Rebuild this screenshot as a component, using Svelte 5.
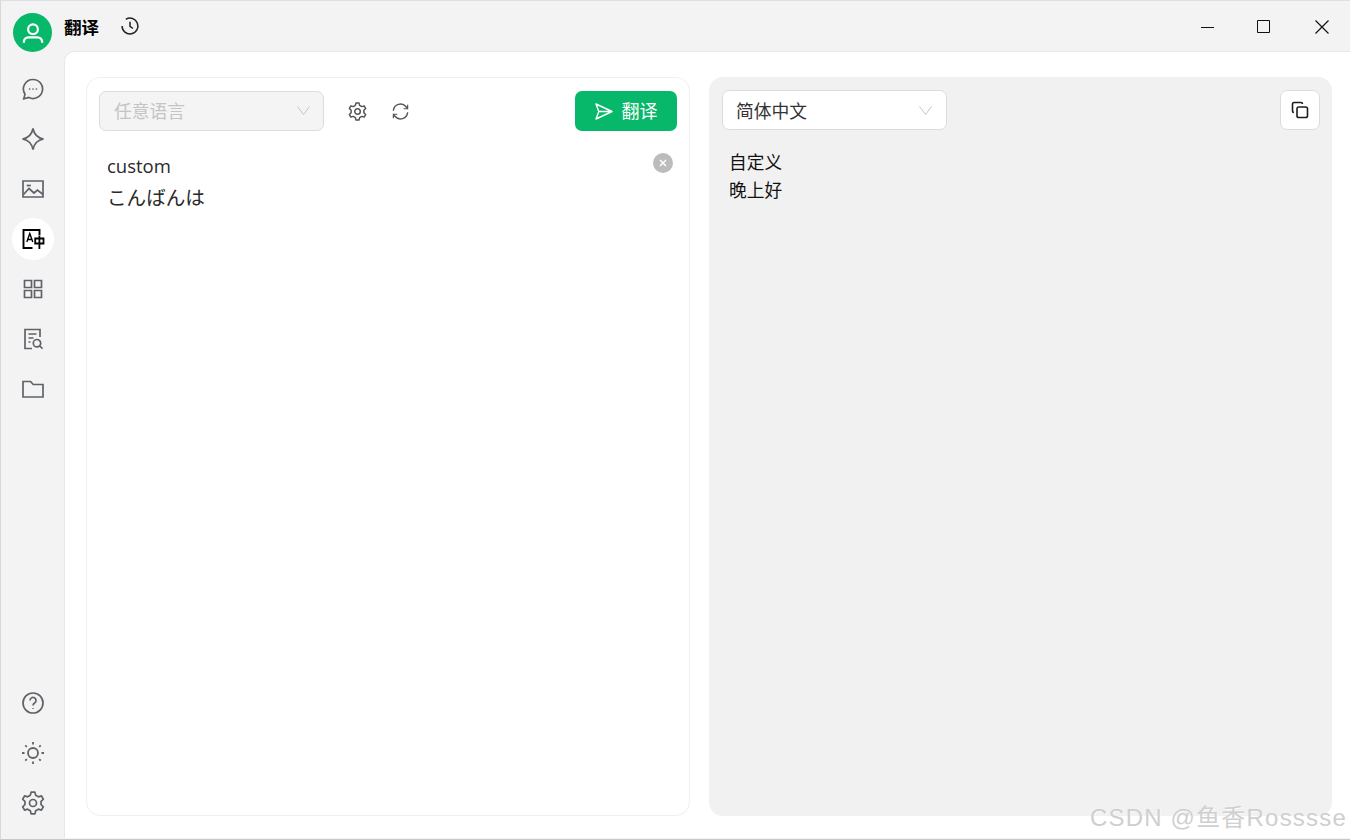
<script>
  // six lobed gear outline, same shape in the sidebar and in the toolbar
  function gearPath(outer, inner) {
    const pts = [];
    for (let k = 0; k < 6; k++) {
      const a = -90 + k * 60;
      for (const [off, r] of [[-19, inner], [-10, outer], [10, outer], [19, inner]]) {
        const t = ((a + off) * Math.PI) / 180;
        pts.push(`${(12 + r * Math.cos(t)).toFixed(2)} ${(12 + r * Math.sin(t)).toFixed(2)}`);
      }
    }
    return 'M' + pts.join('L') + 'Z';
  }

  const gear = gearPath(11, 8.2);

  const topNav = [
    { id: 'chat', paths: ['M12 2.5a9.5 9.5 0 1 1-4.2 18L2.8 21.8l1.2-4.6A9.5 9.5 0 0 1 12 2.5Z', 'M8.6 12h.01M12 12h.01M15.4 12h.01'] },
    { id: 'spark', paths: ['M12 1.5c1.1 6 4.5 9.4 10.5 10.5-6 1.1-9.4 4.5-10.5 10.5-1.1-6-4.5-9.4-10.5-10.500 6-1.100 9.400-4.500 10.500-10.500Z'] },
    { id: 'image', paths: ['M2 4h20v16H2Z', 'M2.5 17.5l5.5-6 5 4.500 3.500-3 5.500 4.500', 'M6.5 8.500h2.500v.01h-2.500Z'] },
    { id: 'translate', active: true },
    { id: 'apps', paths: ['M3.5 3.5h7v7h-7ZM13.5 3.5h7v7h-7ZM3.5 13.5h7v7h-7ZM13.5 13.5h7v7h-7Z'] },
    { id: 'report', paths: ['M19 10V2.5H4v19h7', 'M7.5 7h8M7.5 11h5M7.5 15h2', 'M16 12.5a3.7 3.7 0 1 1 0 7.4 3.7 3.7 0 0 1 0-7.4ZM18.8 19l2.7 2.7'] },
    { id: 'folder', paths: ['M2 4.5h7.5l2.8 3H22v12.500H2Z'] }
  ];
</script>

<div class="app">
  <header class="titlebar">
    <div class="avatar">
      <svg viewBox="0 0 24 24" width="26" height="26" fill="none" stroke="#fff" stroke-width="2">
        <circle cx="12" cy="8.5" r="4.5" />
        <path d="M3.5 21c0-3.500 2-5 4.500-5h8c2.500 0 4.500 1.500 4.500 5" />
      </svg>
    </div>
    <span class="title">翻译</span>
    <svg class="history" viewBox="0 0 24 24" width="20" height="20" fill="none" stroke="#222" stroke-width="1.8">
      <path d="M7 4A9.500 9.500 0 1 1 2.500 12" />
      <path d="M12 7v5.500l3.500 2.500" />
    </svg>
    <div class="window-btns">
      <svg viewBox="0 0 14 14" width="14" height="14" stroke="#111" fill="none"><path d="M0 7.5h13" /></svg>
      <svg viewBox="0 0 14 14" width="14" height="14" stroke="#111" fill="none"><path d="M.5.5h12v12H.5Z" /></svg>
      <svg class="close" viewBox="0 0 14 14" width="14" height="14" stroke="#111" stroke-width="1.2" fill="none"><path d="M.5.5l13 13M13.500.5l-13 13" /></svg>
    </div>
  </header>

  <div class="body">
    <nav class="sidebar">
      <div class="nav-group">
        {#each topNav as item}
          <div class="nav-item" class:active={item.active}>
            {#if item.id === 'translate'}
              <svg viewBox="0 0 24 24" width="24" height="24" fill="none" stroke="#000" stroke-width="1.9">
                <path d="M11.500 21H2.500V3H18.500V8" />
                <path d="M5.800 15 8.800 6.500 11.800 15M6.900 12.500h3.800" stroke-width="1.400" />
                <path d="M14.200 11.500H22.500V16.500H14.200ZM18.400 8.500V22" stroke-width="1.800" />
              </svg>
            {:else}
              <svg viewBox="0 0 24 24" width="24" height="24" fill="none" stroke="#5f6368" stroke-width="1.7">
                {#each item.paths as d}
                  <path {d} stroke-linecap={item.id === 'chat' ? 'round' : undefined} />
                {/each}
              </svg>
            {/if}
          </div>
        {/each}
      </div>
      <div class="nav-group">
        <div class="nav-item">
          <svg viewBox="0 0 24 24" width="24" height="24" fill="none" stroke="#5f6368" stroke-width="1.7">
            <circle cx="12" cy="12" r="10" />
            <path d="M9 9.5a3 3 0 1 1 4.600 2.500c-1 .7-1.600 1.300-1.600 2.500M12 17.200v.8" />
          </svg>
        </div>
        <div class="nav-item">
          <svg viewBox="0 0 24 24" width="24" height="24" fill="none" stroke="#5f6368" stroke-width="1.8">
            <circle cx="12" cy="12" r="5" />
            <path d="M12 1v2.500M12 20.500V23M1 12h2.500M20.500 12H23M4.300 4.300l1.500 1.500M18.200 18.200l1.500 1.500M4.300 19.700l1.500-1.500M18.200 5.800l1.500-1.500" />
          </svg>
        </div>
        <div class="nav-item">
          <svg viewBox="0 0 24 24" width="24" height="24" fill="none" stroke="#5f6368" stroke-width="1.7">
            <path d={gear} stroke-linejoin="round" />
            <circle cx="12" cy="12" r="3.5" />
          </svg>
        </div>
      </div>
    </nav>

    <main class="content">
      <section class="panel source">
        <div class="toolbar">
          <div class="select disabled">
            <span>任意语言</span>
            <svg viewBox="0 0 13 9" width="13" height="9" fill="none" stroke="#c4c4c4" stroke-width="1"><path d="M.5.5 6.500 8.500 12.500.5" /></svg>
          </div>
          <button class="icon-btn" aria-label="settings">
            <svg viewBox="0 0 24 24" width="19" height="19" fill="none" stroke="#555" stroke-width="1.9">
              <path d={gear} stroke-linejoin="round" />
              <circle cx="12" cy="12" r="3.5" />
            </svg>
          </button>
          <button class="icon-btn" aria-label="refresh">
            <svg viewBox="0 0 24 24" width="19" height="19" fill="none" stroke="#555" stroke-width="1.8">
              <path d="M3 11a9 9 0 0 1 16-5l2 2.500M21 13a9 9 0 0 1-16 5l-2-2.500" />
              <path d="M21 3.500v5h-5M3 20.500v-5h5" stroke-width="1.5" />
            </svg>
          </button>
          <button class="translate-btn">
            <svg viewBox="0 0 18 17" width="18" height="17" fill="none" stroke="#fff" stroke-width="1.4">
              <path d="M1 1 17 8.500 1 16 3.800 8.500ZM3.800 8.500H17" stroke-linejoin="round" />
            </svg>
            <span>翻译</span>
          </button>
        </div>
        <div class="source-text">
          <p>custom</p>
          <p class="kana">こんばんは</p>
          <span class="clear">
            <svg viewBox="0 0 8 8" width="8" height="8" stroke="#fff" stroke-width="1.5"><path d="M1 1l6 6M7 1 1 7" /></svg>
          </span>
        </div>
      </section>

      <section class="panel target">
        <div class="toolbar spread">
          <div class="select">
            <span>简体中文</span>
            <svg viewBox="0 0 13 9" width="13" height="9" fill="none" stroke="#c4c4c4" stroke-width="1"><path d="M.5.5 6.500 8.500 12.500.5" /></svg>
          </div>
          <button class="copy-btn" aria-label="copy">
            <svg viewBox="0 0 20 20" width="20" height="20" fill="none" stroke="#1b1b22" stroke-width="1.6">
              <path d="M4 12.500c-1 0-1.500-.5-1.500-1.500V4c0-1 .5-1.500 1.500-1.500h7c1 0 1.500.5 1.500 1.500" />
              <rect x="7" y="7" width="10.500" height="10.500" rx="1.8" />
            </svg>
          </button>
        </div>
        <div class="target-text">
          <p>自定义</p>
          <p>晚上好</p>
        </div>
      </section>
    </main>
  </div>

  <span class="watermark">CSDN @鱼香Rosssse</span>
</div>

<style>
  :global(body) {
    margin: 0;
    background: #f3f3f3;
  }

  .app {
    position: relative;
    box-sizing: border-box;
    width: 1350px;
    height: 840px;
    display: flex;
    flex-direction: column;
    padding-bottom: 1px;
    border-top: 1px solid #dcdfe8;
    border-left: 1px solid #d8d8d8;
    border-bottom: 1px solid #c8c8c8;
    background: #f3f3f3;
    font-family: 'Noto Sans CJK SC', 'Open Sans', sans-serif;
    overflow: hidden;
  }

  .titlebar {
    height: 50px;
    display: flex;
    align-items: center;
    flex: none;
    padding-left: 12px;
  }

  .avatar {
    width: 39px;
    height: 39px;
    border-radius: 50%;
    background: #07b76a;
    display: flex;
    align-items: center;
    justify-content: center;
    margin-top: 13px;
  }

  .title {
    margin-left: 12px;
    font-size: 17.5px;
    font-weight: 700;
    color: #000;
  }

  .history {
    margin-left: 21px;
  }

  .window-btns {
    margin-left: auto;
    display: flex;
    align-items: center;
    gap: 42px;
    padding: 2px 21px 0 0;
  }

  .close {
    margin-left: 2px;
  }

  .body {
    flex: 1;
    display: flex;
    min-height: 0;
  }

  .sidebar {
    width: 63px;
    flex: none;
    display: flex;
    flex-direction: column;
    justify-content: space-between;
    padding: 17px 0 14px;
  }

  .nav-group {
    display: flex;
    flex-direction: column;
    align-items: center;
    gap: 8px;
  }

  .nav-item {
    width: 42px;
    height: 42px;
    border-radius: 50%;
    display: flex;
    align-items: center;
    justify-content: center;
  }

  .nav-item.active {
    background: #fff;
  }

  .content {
    flex: 1;
    display: flex;
    gap: 19px;
    padding: 25px 18px 22px 21px;
    background: #fff;
    border-top: 1px solid #e8e8e8;
    border-left: 1px solid #e8e8e8;
    border-top-left-radius: 10px;
  }

  .panel {
    box-sizing: border-box;
    border-radius: 14px;
    padding: 13px 12px;
    min-width: 0;
  }

  .source {
    width: 604px;
    flex: none;
    border: 1px solid #efefef;
  }

  .target {
    flex: 1;
    padding: 13px 12px 14px 13px;
    background: #f1f1f1;
  }

  .toolbar {
    display: flex;
    align-items: center;
  }

  .toolbar.spread {
    justify-content: space-between;
  }

  .select {
    box-sizing: border-box;
    width: 225px;
    height: 40px;
    padding: 0 14px 0 13px;
    display: flex;
    align-items: center;
    justify-content: space-between;
    background: #fff;
    border: 1px solid #dcdcdc;
    border-radius: 7px;
    font-size: 17.8px;
    color: #333;
  }

  .select.disabled {
    padding: 0 13px 2px 14px;
    background: #f4f4f4;
    color: #c4c4c4;
  }

  .icon-btn {
    border: 0;
    background: none;
    padding: 0;
    width: 43px;
    height: 40px;
    display: flex;
    align-items: center;
    justify-content: center;
  }

  .source .icon-btn:first-of-type {
    margin-left: 12px;
  }

  .translate-btn {
    margin-left: auto;
    width: 102px;
    height: 40px;
    border: 0;
    border-radius: 7px;
    background: #07b76a;
    color: #fff;
    font: inherit;
    font-size: 18px;
    display: flex;
    align-items: center;
    justify-content: center;
    gap: 9px;
  }

  .translate-btn span {
    padding-bottom: 2px;
  }

  .copy-btn {
    box-sizing: border-box;
    width: 40px;
    height: 40px;
    border: 1px solid #dcdcdc;
    border-radius: 7px;
    background: #fff;
    padding: 0;
    display: flex;
    align-items: center;
    justify-content: center;
  }

  .source-text {
    position: relative;
    padding: 19px 8px 0;
    font-family: 'Open Sans', 'Noto Sans CJK JP', sans-serif;
    font-size: 18.5px;
    color: #2a2a2a;
  }

  .source-text p {
    margin: 0;
    line-height: 31px;
    height: 31px;
  }

  .source-text .kana {
    font-family: 'Noto Sans CJK JP', sans-serif;
    font-size: 19.6px;
  }

  .clear {
    position: absolute;
    top: 22px;
    right: 4px;
    width: 20px;
    height: 20px;
    border-radius: 50%;
    background: #bcbcbc;
    display: flex;
    align-items: center;
    justify-content: center;
  }

  .target-text {
    padding: 17px 7px 0;
    font-size: 17.7px;
    color: #111;
  }

  .target-text p {
    margin: 0;
    line-height: 28px;
    height: 28px;
  }

  .watermark {
    position: absolute;
    right: 3px;
    bottom: 6px;
    font-family: 'Liberation Sans', 'Noto Sans CJK SC', sans-serif;
    font-size: 24px;
    letter-spacing: 1.2px;
    line-height: 30px;
    color: #cfcfcf;
    text-shadow: 1px 1px 0 rgba(255, 255, 255, 0.7);
  }
</style>
